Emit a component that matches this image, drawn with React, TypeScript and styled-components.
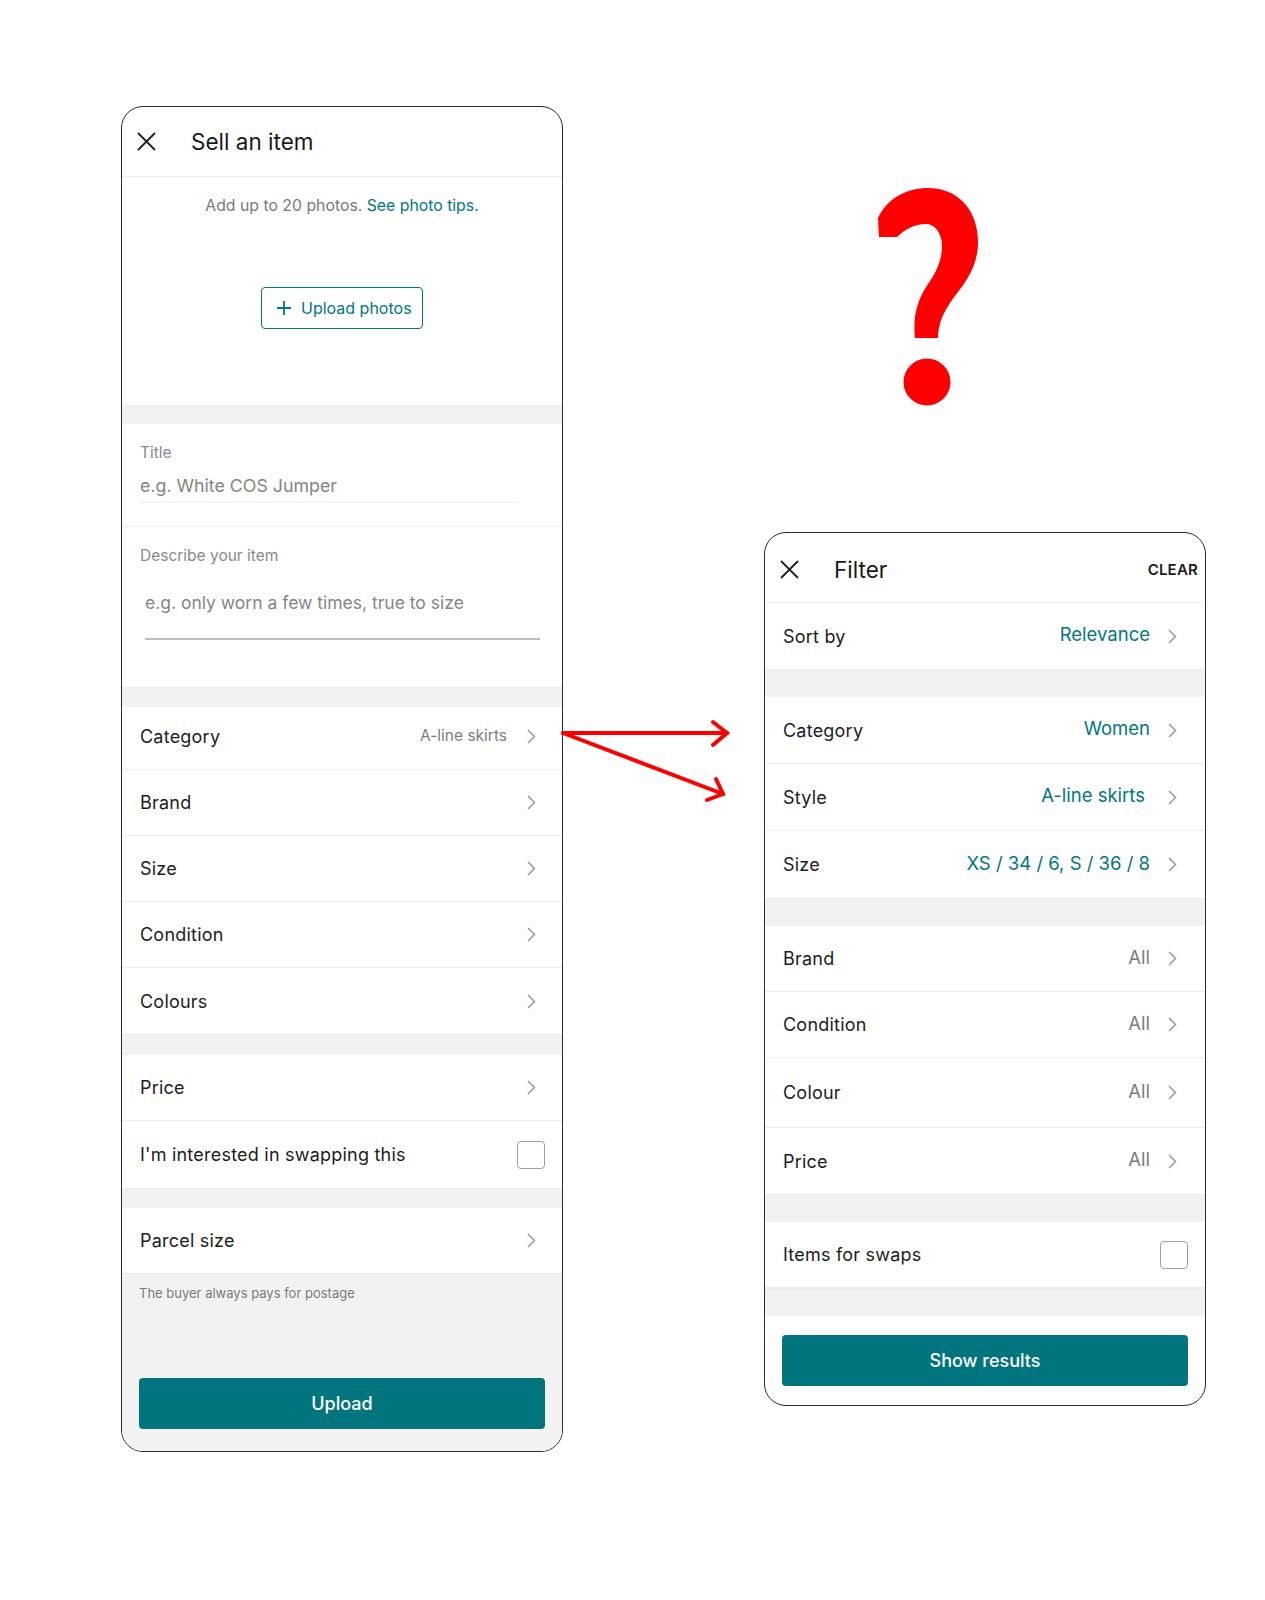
import React from 'react';
import styled, { createGlobalStyle } from 'styled-components';

const teal = '#007782';
const band = '#f2f2f2';
const line = '#ebebeb';

const GlobalStyle = createGlobalStyle`
  body {
    margin: 0;
    background: #fff;
    font-family: Inter, "Noto Sans", sans-serif;
    color: #1c1c1c;
  }
`;

const Canvas = styled.div`
  position: relative;
  width: 1265px;
  height: 1600px;
  box-sizing: border-box;
  padding: 106px 0 0 121px;
  display: flex;
  align-items: flex-start;
  gap: 201px;
`;

const Phone = styled.div`
  width: 442px;
  box-sizing: border-box;
  border: 1.5px solid #2b2b2b;
  border-radius: 22px;
  overflow: hidden;
  background: #fff;
  display: flex;
  flex-direction: column;
`;

const Header = styled.div<{ $h: number; $top?: number }>`
  height: ${(p) => p.$h}px;
  box-sizing: border-box;
  display: flex;
  align-items: center;
  padding: ${(p) => p.$top ?? 0}px 7px 0 15px;
  border-bottom: 1px solid ${line};
  flex-shrink: 0;
`;

const HeaderTitle = styled.h1`
  margin: 0 0 0 35px;
  font-size: 22.5px;
  font-weight: 400;
  color: #1a1a1a;
  flex: 1;
`;

const Clear = styled.span`
  font-size: 15px;
  font-weight: 600;
  color: #1a1a1a;
  letter-spacing: 0.2px;
`;

const PhotoSection = styled.div`
  height: 228px;
  display: flex;
  flex-direction: column;
  align-items: center;
  padding-top: 19px;
  box-sizing: border-box;
`;

const Hint = styled.p`
  margin: 0;
  font-size: 15.8px;
  color: #7a7a7a;
  a {
    color: ${teal};
    text-decoration: none;
  }
`;

const OutlineButton = styled.button`
  margin-top: 72px;
  height: 42px;
  width: 162px;
  border: 1.5px solid ${teal};
  border-radius: 4px;
  background: #fff;
  color: ${teal};
  font-family: inherit;
  font-size: 16px;
  display: flex;
  align-items: center;
  gap: 10px;
  padding: 0 0 0 15px;
`;

const Band = styled.div<{ $h: number }>`
  height: ${(p) => p.$h}px;
  background: ${band};
  border-top: 1px solid ${line};
  box-sizing: border-box;
  flex-shrink: 0;
`;

const Field = styled.div<{ $h: number; $last?: boolean }>`
  height: ${(p) => p.$h}px;
  box-sizing: border-box;
  padding: 19px 18px 0;
  border-bottom: ${(p) => (p.$last ? 'none' : `1px solid ${line}`)};
  display: flex;
  flex-direction: column;
`;

const FieldLabel = styled.span`
  font-size: 15.5px;
  color: #8a8a8a;
`;

const TitleInput = styled.div`
  margin-top: 13px;
  width: 378px;
  padding-bottom: 6px;
  border-bottom: 1.5px solid #eeeeee;
  font-size: 17.8px;
  color: #858585;
`;

const DescInput = styled.div`
  margin: 27px 4px 0 5px;
  padding-bottom: 25px;
  border-bottom: 2px solid #bdbdbd;
  font-size: 17.5px;
  color: #858585;
`;

const Row = styled.div<{ $h: number; $pad: number; $raise?: number }>`
  height: ${(p) => p.$h}px;
  box-sizing: border-box;
  display: flex;
  align-items: center;
  padding: 0 ${(p) => p.$pad}px ${(p) => p.$raise ?? 0}px 18px;
  border-bottom: 1px solid ${line};
  flex-shrink: 0;
  &:last-child {
    border-bottom: none;
  }
`;

const RowLabel = styled.span`
  flex: 1;
  font-size: 18px;
  letter-spacing: 0.22px;
  color: #1c1c1c;
`;

const RowValue = styled.span<{ $accent?: boolean; $size: number; $gap: number; $lift: number }>`
  font-size: ${(p) => p.$size}px;
  color: ${(p) => (p.$accent ? teal : '#7d7d7d')};
  margin-right: ${(p) => p.$gap}px;
  margin-top: -${(p) => p.$lift}px;
`;

const Checkbox = styled.span`
  width: 28px;
  height: 28px;
  box-sizing: border-box;
  border: 1.5px solid #9e9e9e;
  border-radius: 4px;
`;

const Footer = styled.div`
  background: ${band};
  padding: 11px 17px 22px;
  display: flex;
  flex-direction: column;
`;

const Note = styled.span`
  font-size: 13px;
  color: #7a7a7a;
  margin-bottom: 77px;
`;

const SolidButton = styled.button`
  height: 51px;
  width: 100%;
  border: none;
  border-radius: 4px;
  background: #00757e;
  color: #fff;
  font-family: inherit;
  font-size: 18px;
  font-weight: 500;
`;

const ButtonArea = styled.div`
  padding: 19px 17px 19px;
`;

const RightColumn = styled.div`
  display: flex;
  flex-direction: column;
`;

const QuestionMark = styled.div`
  height: 426px;
  padding: 80px 0 0 112px;
  box-sizing: border-box;
`;

const ArrowLayer = styled.svg`
  position: absolute;
  left: 555px;
  top: 712px;
`;

const CloseIcon = () => (
  <svg width="19" height="19" viewBox="0 0 19 19">
    <path d="M1 1L18 18M18 1L1 18" stroke="#1f1f1f" strokeWidth="1.8" fill="none" />
  </svg>
);

const Chevron = () => (
  <svg width="9" height="15" viewBox="0 0 9 15">
    <path d="M1 1L7.5 7.5L1 14" stroke="#9a9a9a" strokeWidth="1.5" fill="none" />
  </svg>
);

const PlusIcon = () => (
  <svg width="14" height="14" viewBox="0 0 14 14">
    <path d="M7 0V14M0 7H14" stroke={teal} strokeWidth="1.8" fill="none" />
  </svg>
);

// red clip-art question mark beside the filter screen
const QuestionIcon = () => (
  <svg width="106" height="222" viewBox="0 0 106 222">
    <path
      fill="#ff0000"
      d="M3 51 L2 32 C12 11 32 2 52 2 C82 2 102 24 102 56 C102 82 88 98 76 114 C66 128 62 140 62 152 L39 152 C37 132 40 116 52 98 C62 84 66 72 66 60 C66 46 58 38 50 38 C38 38 28 44 21 51 Z"
    />
    <circle cx="51" cy="196" r="23.5" fill="#ff0000" />
  </svg>
);

type FilterRow = { label: string; value: string; accent?: boolean; h: number; gap?: number };

const sortRows: FilterRow[] = [{ label: 'Sort by', value: 'Relevance', accent: true, h: 66 }];
const catRows: FilterRow[] = [
  { label: 'Category', value: 'Women', accent: true, h: 67 },
  { label: 'Style', value: 'A-line skirts', accent: true, h: 67, gap: 23 },
  { label: 'Size', value: 'XS / 34 / 6, S / 36 / 8', accent: true, h: 67 },
];
const moreRows: FilterRow[] = [
  { label: 'Brand', value: 'All', h: 66 },
  { label: 'Condition', value: 'All', h: 66 },
  { label: 'Colour', value: 'All', h: 70 },
  { label: 'Price', value: 'All', h: 66 },
];

const SellRow: React.FC<{ label: string; value?: string; h?: number; raise?: number }> = ({
  label,
  value,
  h = 66,
  raise,
}) => (
  <Row $h={h} $pad={26} $raise={raise}>
    <RowLabel>{label}</RowLabel>
    {value && (
      <RowValue $size={15.5} $gap={20} $lift={2}>
        {value}
      </RowValue>
    )}
    <Chevron />
  </Row>
);

const renderFilterRows = (rows: FilterRow[]) =>
  rows.map((r) => (
    <Row key={r.label} $h={r.h} $pad={28}>
      <RowLabel>{r.label}</RowLabel>
      <RowValue $accent={r.accent} $size={18.5} $gap={r.gap ?? 18} $lift={4}>
        {r.value}
      </RowValue>
      <Chevron />
    </Row>
  ));

const App: React.FC = () => {
  return (
    <>
      <GlobalStyle />
      <Canvas>
        <Phone>
          <Header $h={70}>
            <CloseIcon />
            <HeaderTitle>Sell an item</HeaderTitle>
          </Header>
          <PhotoSection>
            <Hint>
              Add up to 20 photos. <a href="#">See photo tips.</a>
            </Hint>
            <OutlineButton type="button">
              <PlusIcon />
              Upload photos
            </OutlineButton>
          </PhotoSection>
          <Band $h={19} />
          <Field $h={103}>
            <FieldLabel>Title</FieldLabel>
            <TitleInput>e.g. White COS Jumper</TitleInput>
          </Field>
          <Field $h={160} $last>
            <FieldLabel>Describe your item</FieldLabel>
            <DescInput>e.g. only worn a few times, true to size</DescInput>
          </Field>
          <Band $h={20} />
          <div>
            <SellRow label="Category" value="A-line skirts" h={63} raise={3} />
            <SellRow label="Brand" />
            <SellRow label="Size" />
            <SellRow label="Condition" />
            <SellRow label="Colours" />
          </div>
          <Band $h={21} />
          <div>
            <SellRow label="Price" />
            <Row $h={67} $pad={17}>
              <RowLabel>I'm interested in swapping this</RowLabel>
              <Checkbox />
            </Row>
          </div>
          <Band $h={20} />
          <SellRow label="Parcel size" />
          <Footer>
            <Note>The buyer always pays for postage</Note>
            <SolidButton type="button">Upload</SolidButton>
          </Footer>
        </Phone>

        <RightColumn>
          <QuestionMark>
            <QuestionIcon />
          </QuestionMark>
          <Phone>
            <Header $h={70} $top={4}>
              <CloseIcon />
              <HeaderTitle>Filter</HeaderTitle>
              <Clear>CLEAR</Clear>
            </Header>
            <div>{renderFilterRows(sortRows)}</div>
            <Band $h={28} />
            <div>{renderFilterRows(catRows)}</div>
            <Band $h={28} />
            <div>{renderFilterRows(moreRows)}</div>
            <Band $h={28} />
            <Row $h={66} $pad={17}>
              <RowLabel>Items for swaps</RowLabel>
              <Checkbox />
            </Row>
            <Band $h={28} />
            <ButtonArea>
              <SolidButton type="button">Show results</SolidButton>
            </ButtonArea>
          </Phone>
        </RightColumn>

        <ArrowLayer width="185" height="95" viewBox="0 0 185 95">
          <g stroke="#ff0000" strokeWidth="4" fill="none" strokeLinecap="round">
            <path d="M8 21H172" />
            <path d="M158 10L172 21L158 33" />
            <path d="M8 21L168 82" />
            <path d="M161 67L168 82L152 88" />
          </g>
        </ArrowLayer>
      </Canvas>
    </>
  );
};

export default App;
